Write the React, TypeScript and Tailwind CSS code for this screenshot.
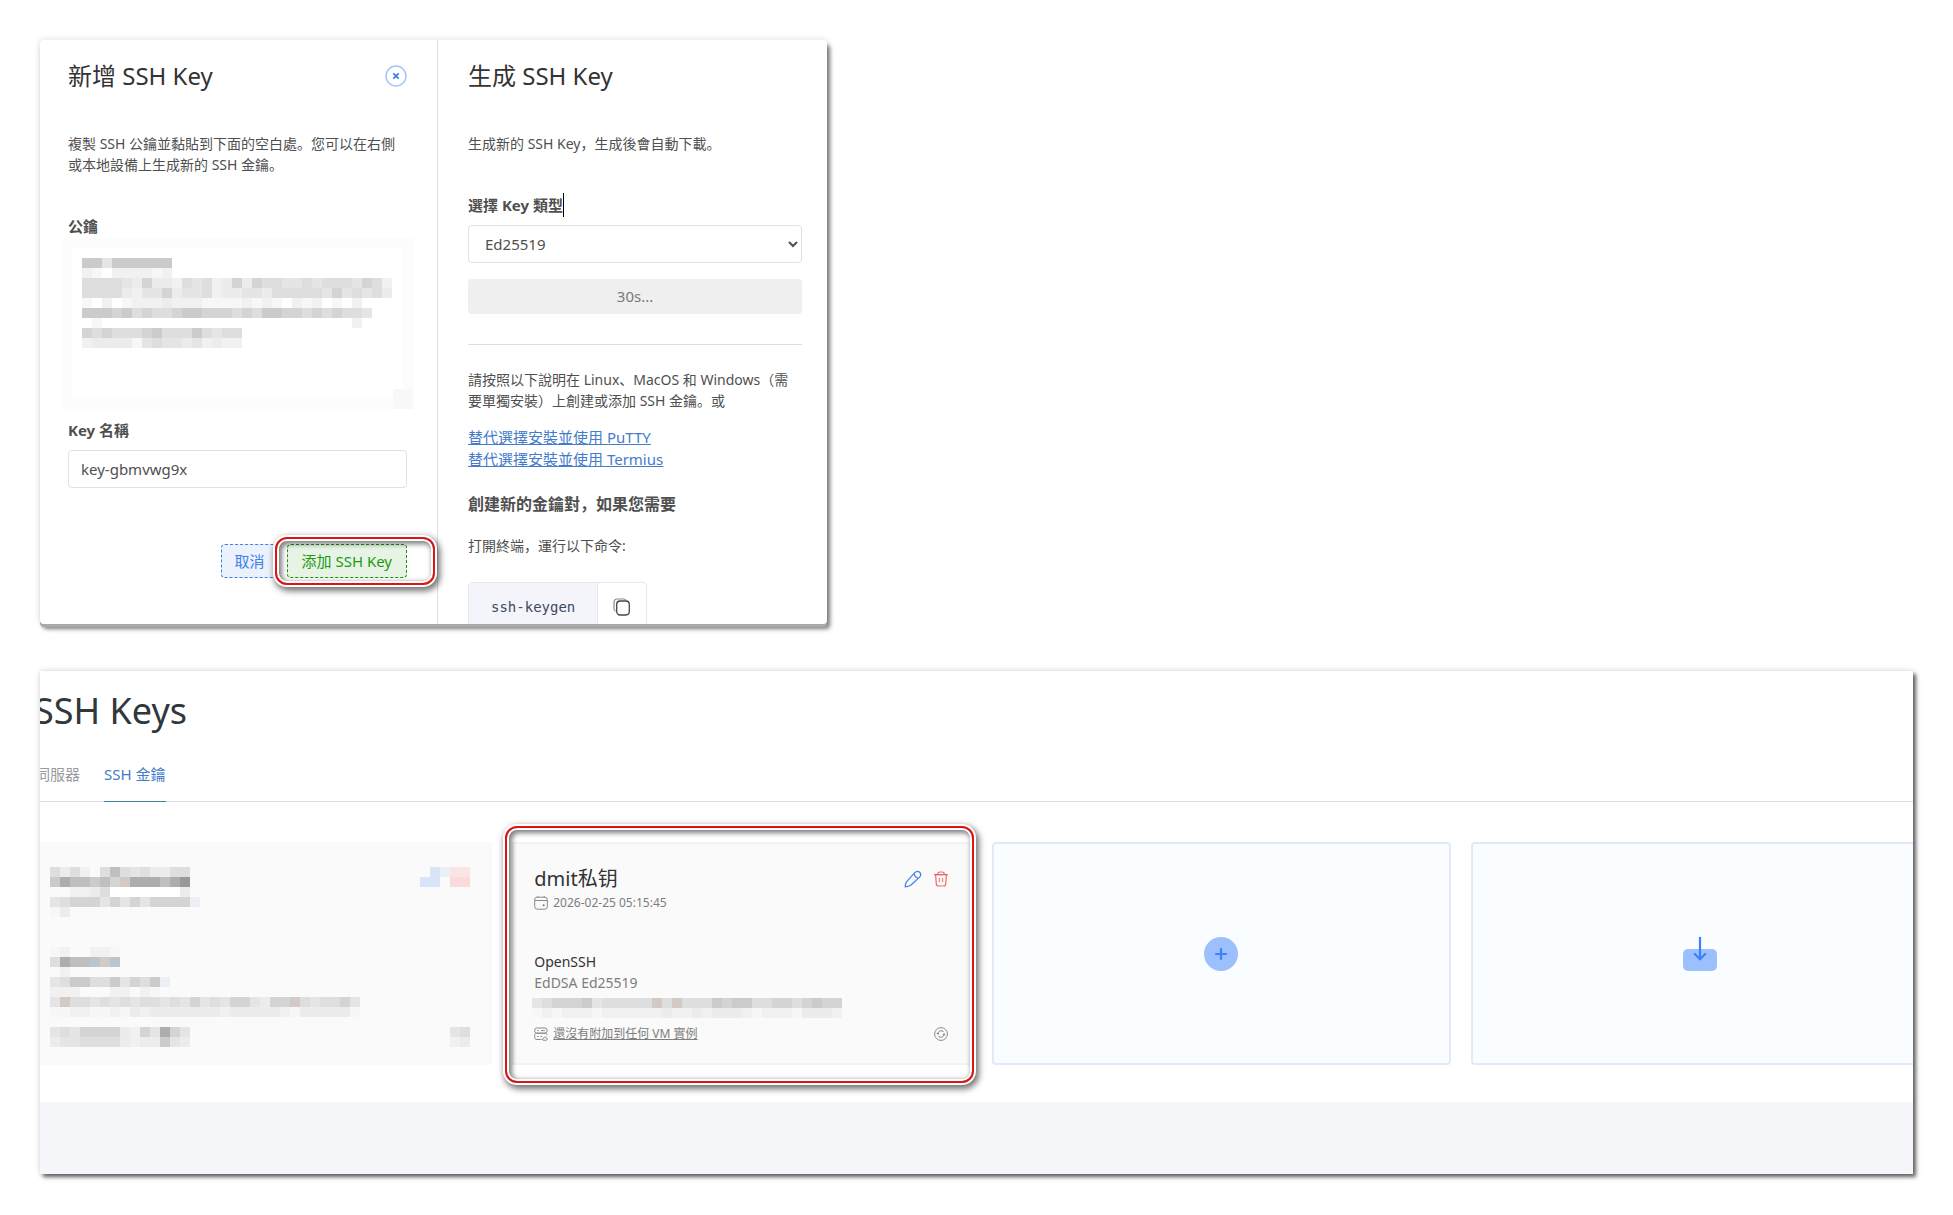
import { useState } from "react";

const palette: Record<string, string> = {
  a: "#f7f7f7",
  b: "#f1f1f1",
  c: "#ececec",
  d: "#e5e5e5",
  e: "#dddede",
  f: "#d4d4d5",
  g: "#cacbcb",
  h: "#bfbfbf",
  i: "#adadad",
  j: "#9c979c",
  w: "#ffffff",
  B: "#d9e4f8",
  C: "#ecf0f6",
  R: "#fae5e5",
  S: "#fadada",
  T: "#d3cac6",
  U: "#bcc5cc",
};

const publicKeyCells = [
  "ggdgggggg",
  "ba.bbbbab",
  "eeeedcfccbedebcfcfeeddedeeedfeb",
  "eeeecbddfcddebccddceeeeedfdedec",
  "a.b.abbbcbbbaaaababa.bab.a.b",
  "gggfgefeefggfffefeggffefefeed",
  ".a.........................b",
  "fefeeefgeeegedee",
  "bccccadeddcdbcbb",
];

const hiddenKeyCells = [
  "eceb.ehedeccee",
  "gihhghfTiiihij",
  "..bbcewwwwwwwc",
  "defffdfdfdffffC",
  "ac",
  "",
  "",
  "",
  "ab..bba",
  "eihhUTU",
  ".b",
  "deggeegdfegC",
  "bbb...bb.ba",
  "dTeedededeededfdedffdcffTedeefd",
  "aabbaabacbcccccccbcccccbaccccca",
  "",
  "dedffffcbfdifd",
  "cddeeeecbccgdc",
];

const hiddenActionCells = [
  ".BCRR",
  "BB.SS",
  ...Array(14).fill(""),
  "...de",
  "...bc",
];

const fingerprintCells = [
  "defffgdeeeeeTeTeeegfggeeffefgff",
  "ababbbabbbbbbcbbcbcccbabbbacccb",
];

const Mosaic = ({ rows, className = "" }: { rows: string[]; className?: string }) => {
  const cols = Math.max(...rows.map((row) => row.length));
  return (
    <svg
      className={`shrink-0 ${className}`}
      width={cols * 10}
      height={rows.length * 10}
      shapeRendering="crispEdges"
      aria-hidden="true"
    >
      {rows.map((row, y) =>
        row.split("").map((cell, x) =>
          palette[cell] ? (
            <rect
              key={`${x}-${y}`}
              x={x * 10}
              y={y * 10}
              width="10"
              height="10"
              fill={palette[cell]}
            />
          ) : null
        )
      )}
    </svg>
  );
};

const frame =
  "pointer-events-none absolute z-10 rounded-xl border-2 border-[#dc1414] shadow-[0_0_0_2px_#fff,2px_3px_6px_3px_rgba(0,0,0,0.55),inset_0_0_0_2px_#fff,inset_2px_2px_5px_3px_rgba(0,0,0,0.5)]";

const CloseIcon = () => (
  <svg width="22" height="22" viewBox="0 0 22 22" fill="none">
    <circle cx="11" cy="11" r="10" stroke="#a5c4fb" strokeWidth="1.5" />
    <path d="M8.3 8.3l5.4 5.4M13.7 8.3l-5.4 5.4" stroke="#3f80ea" strokeWidth="1.8" />
  </svg>
);

const CopyIcon = () => (
  <svg width="18" height="18" viewBox="0 0 18 18" fill="none" stroke="#444">
    <path
      d="M2.6 13.2C1.5 12.8 1 12 1 10.8V4.5C1 2.2 2.2 1 4.5 1h6.2c1.3 0 2.1.4 2.6 1.4"
      stroke="#8a8a8a"
      strokeWidth="1.2"
    />
    <rect x="3.7" y="3" width="12.6" height="14" rx="3.4" strokeWidth="1.3" />
  </svg>
);

const PencilIcon = () => (
  <svg width="18" height="18" viewBox="0 0 18 18" fill="none" stroke="#3f80ea" strokeWidth="1.2">
    <path d="M1.2 16.8c.1-2 .5-3.9 1.5-5.2L10.8 2.7c1.5-1.5 3.3-1.7 4.8-.4 1.5 1.4 1.4 3.2 0 4.8L7 15c-1.4 1.2-3.5 1.7-5.8 1.8z" />
    <path d="M10.2 3.8c.3 2.2 1.6 3.7 3.9 4.2" />
  </svg>
);

const TrashIcon = () => (
  <svg width="14" height="16" viewBox="0 0 14 16" fill="none" stroke="#ee6a6a" strokeWidth="1.2">
    <path d="M.2 3.7h13.6" stroke="#e35050" />
    <path d="M3.5 3.5C3.7 1.7 4.5 1 5.8 1h2.4c1.3 0 2.1.7 2.3 2.5" />
    <path d="M1.6 4l.7 8.700c.1 1.600.8 2.300 2.300 2.300h4.800c1.500 0 2.200-.7 2.300-2.300L12.400 4" />
    <path d="M5.3 7v4.200M8.700 7v4.200" strokeWidth="1" />
  </svg>
);

const CalendarIcon = () => (
  <svg width="14" height="14" viewBox="0 0 14 14" fill="none" stroke="#8a8a8a">
    <rect x=".7" y="1.2" width="12.6" height="12" rx="2.5" />
    <path d="M.7 4.5h12.6M3.8 0v1.5M10.2 0v1.5" />
    <circle cx="9.6" cy="9.2" r="1" fill="#777" stroke="none" />
  </svg>
);

const ServerIcon = () => (
  <svg width="14" height="14" viewBox="0 0 14 14" fill="none" stroke="#8a8a8a">
    <rect x=".7" y="1" width="12.3" height="5.2" rx="2" />
    <path d="M7.5 12.5H3c-1.6 0-2.3-.8-2.3-2.3V8.3c0-1.300.7-2.100 2.300-2.100h8c1.300 0 2 .7 2 2" />
    <path d="M3.2 3.6h1.6M7 3.600h3.800M3.200 9.500h1.600M6.500 9.500h1.600" />
    <path d="M9 13.2c-1.300-1.200 0-2.300.7-2 .3-1.700 2.600-1.400 2.600-.1 1.200 0 1.400 1.700.3 2.100z" />
  </svg>
);

const RefreshIcon = () => (
  <svg width="14" height="14" viewBox="0 0 14 14" fill="none" stroke="#8a8a8a">
    <circle cx="7" cy="7" r="6.4" />
    <path d="M3.8 6.8c.5-3.300 4.300-4 6-1.600M10.200 7.200c-.5 3.300-4.300 4-6 1.600" stroke="#777" />
    <path d="M2.800 6l1 1.200L5.200 6.300M11.200 8l-1-1.200-1.400.9" stroke="#777" />
  </svg>
);

const PlusIcon = () => (
  <svg width="34" height="34" viewBox="0 0 34 34">
    <circle cx="17" cy="17" r="17" fill="#9cbffd" />
    <path d="M17 12v10M12 17h10" stroke="#3f80f7" strokeWidth="2.2" strokeLinecap="round" />
  </svg>
);

const ImportIcon = () => (
  <svg width="34" height="34" viewBox="0 0 34 34" fill="none">
    <rect y="12" width="34" height="22" rx="5" fill="#9cbffd" />
    <path
      d="M17 0v22M11.8 17l5.2 5.2 5.2-5.2"
      stroke="#3f80f7"
      strokeWidth="2.2"
      strokeLinecap="round"
    />
  </svg>
);

const App = () => {
  const [publicKey, setPublicKey] = useState("");
  const [keyName, setKeyName] = useState("key-gbmvwg9x");
  const [keyType, setKeyType] = useState("Ed25519");

  return (
    <div className="bg-white px-10 py-10 font-['Noto_Sans','Noto_Sans_CJK_SC',sans-serif] text-[#4f4f4f]">
      {/* Add and generate */}
      <div className="grid w-full max-w-[787px] grid-cols-[398fr_389fr] rounded-sm bg-white shadow-[0_3px_0_#a9a9a9,3px_5px_4px_rgba(0,0,0,0.5),0_0_6px_rgba(0,0,0,0.15)]">
        <section className="border-r border-[#dedfe1] pt-5 pb-[45px] pl-7 pr-[30px]">
          <div className="flex items-center justify-between">
            <h2 className="text-2xl leading-8 text-[#333]">新增 SSH Key</h2>
            <button aria-label="Close">
              <CloseIcon />
            </button>
          </div>
          <p className="mt-[41px] text-sm leading-[21px]">
            複製 SSH 公鑰並黏貼到下面的空白處。您可以在右側或本地設備上生成新的 SSH 金鑰。
          </p>

          <label htmlFor="publicKey" className="mt-[39px] block text-[15px] font-bold leading-6">
            公鑰
          </label>
          <div className="relative -mx-1.5">
            <textarea
              id="publicKey"
              value={publicKey}
              onChange={(e) => setPublicKey(e.target.value)}
              className="block h-[171px] w-full resize-none border-10 border-[#fcfcfd] bg-white p-2.5 outline-none"
            />
            <Mosaic rows={publicKeyCells} className="pointer-events-none absolute left-5 top-5" />
            <span className="absolute bottom-0 right-0 h-5 w-5 bg-[#f8f8f8]" />
          </div>

          <label htmlFor="keyName" className="mt-[9px] block text-[15px] font-bold leading-6">
            Key 名稱
          </label>
          <input
            id="keyName"
            value={keyName}
            onChange={(e) => setKeyName(e.target.value)}
            className="mt-2 block h-[38px] w-full rounded-sm border border-[#dfe2e5] px-3 text-[15px] outline-none"
          />

          <div className="mt-14 flex justify-end gap-2">
            <button className="h-[34px] rounded border border-dashed border-[#3f80ea] bg-[#ebf2fd] px-[13px] text-[15px] text-[#3f80ea]">
              取消
            </button>
            <div className="relative">
              <button className="h-[34px] rounded border border-dashed border-[#1c8f12] bg-[#e6f3e5] px-3.5 text-[15px] text-[#1c9a10]">
                添加 SSH Key
              </button>
              <span className={`${frame} -inset-y-[7px] -left-3 -right-7`} />
            </div>
          </div>
        </section>

        <section className="pt-5 pl-[30px] pr-[25px]">
          <h2 className="text-2xl leading-8 text-[#333]">生成 SSH Key</h2>
          <p className="mt-[41px] text-sm leading-[21px]">
            生成新的 SSH Key，生成後會自動下載。
          </p>

          <label htmlFor="keyType" className="mt-[39px] flex text-[15px] font-bold leading-6">
            <span className="border-r border-black">選擇 Key 類型</span>
          </label>
          <select
            id="keyType"
            value={keyType}
            onChange={(e) => setKeyType(e.target.value)}
            className="mt-2 block h-[38px] w-full rounded-sm border border-[#dfe2e5] bg-white pl-3 text-[15px]"
          >
            <option>Ed25519</option>
          </select>
          <button disabled className="mt-4 block h-[35px] w-full rounded bg-[#efefef] text-[15px] text-[#7a7a7a]">
            30s...
          </button>

          <hr className="mt-[30px] border-[#dedede]" />

          <p className="mt-6 text-sm leading-[21px]">
            請按照以下說明在 Linux、MacOS 和 Windows（需要單獨安裝）上創建或添加 SSH 金鑰。或
          </p>
          <div className="mt-[15px] flex flex-col items-start text-[15px] leading-[22px] text-[#447cc9] underline">
            <a href="#putty">替代選擇安裝並使用 PuTTY</a>
            <a href="#termius">替代選擇安裝並使用 Termius</a>
          </div>
          <h3 className="mt-[22px] text-base font-bold leading-6">創建新的金鑰對，如果您需要</h3>
          <p className="mt-[19px] text-sm leading-[21px]">打開終端，運行以下命令:</p>
          <div className="mt-[26px] max-h-[42px] overflow-hidden">
            <div className="flex h-[50px] w-fit rounded-sm border border-[#e6e8ec]">
              <code className="border-r border-[#e6e8ec] bg-[#f3f5fa] px-[22px] font-['DejaVu_Sans_Mono',monospace] text-sm leading-[48px] text-[#3d4a5f]">
                ssh-keygen
              </code>
              <button aria-label="Copy" className="px-[15px]">
                <CopyIcon />
              </button>
            </div>
          </div>
        </section>
      </div>

      {/* Key list */}
      <div className="mt-[47px] overflow-hidden bg-white shadow-[3px_3px_4px_rgba(0,0,0,0.6),0_0_6px_rgba(0,0,0,0.15)]">
        <h1 className="-ml-1.5 pt-[18px] text-4xl leading-[44px] text-[#30373d]">SSH Keys</h1>
        <nav className="-ml-[5px] mt-[30px] flex gap-6 border-b border-[#dcdfe0] text-[15px] leading-[22px]">
          <a href="#servers" className="pb-4 text-[#999ba0]">
            伺服器
          </a>
          <a href="#keys" className="-mb-px border-b border-[#47809f] pb-4 text-[#447cc9]">
            SSH 金鑰
          </a>
        </nav>

        <div className="-ml-[7px] -mr-[17px] mt-10 grid grid-cols-4 gap-5 pb-[37px]">
          <div className="flex justify-between bg-[#fafafa] pt-[25px] pl-[17px] pr-[22px]">
            <Mosaic rows={hiddenKeyCells} />
            <Mosaic rows={hiddenActionCells} />
          </div>

          <div className="relative border-2 border-[#f2f2f2] bg-[#fafafa] pt-[21px] pb-[19px] pl-5 pr-[22px] text-[#7d7d7d]">
            <div className="flex items-center justify-between">
              <h3 className="text-xl leading-7 text-[#333]">dmit私钥</h3>
              <div className="flex items-center gap-3">
                <button aria-label="Edit">
                  <PencilIcon />
                </button>
                <button aria-label="Delete">
                  <TrashIcon />
                </button>
              </div>
            </div>
            <p className="flex items-center gap-[5px] text-xs leading-5">
              <CalendarIcon />
              2026-02-25 05:15:45
            </p>
            <p className="mt-[38px] text-sm leading-[21px] text-[#333]">OpenSSH</p>
            <p className="text-sm leading-[21px]">EdDSA Ed25519</p>
            <Mosaic rows={fingerprintCells} className="-ml-0.5 mt-[5px]" />
            <div className="mt-1.5 flex items-center justify-between">
              <div className="flex items-center gap-[5px] text-xs leading-5">
                <ServerIcon />
                <a href="#instances" className="underline">
                  還沒有附加到任何 VM 實例
                </a>
              </div>
              <button aria-label="Refresh">
                <RefreshIcon />
              </button>
            </div>
            <span className={`${frame} -left-[9px] -right-1 -top-[18px] -bottom-5`} />
          </div>

          <button
            aria-label="Add key"
            className="flex items-center justify-center rounded border-2 border-[#e2eaf7] bg-[#f9fdff]"
          >
            <PlusIcon />
          </button>
          <button
            aria-label="Import key"
            className="flex items-center justify-center rounded border-2 border-[#e2eaf7] bg-[#f9fdff]"
          >
            <ImportIcon />
          </button>
        </div>
        <div className="h-[72px] bg-[#f5f6fa]" />
      </div>
    </div>
  );
};

export default App;
